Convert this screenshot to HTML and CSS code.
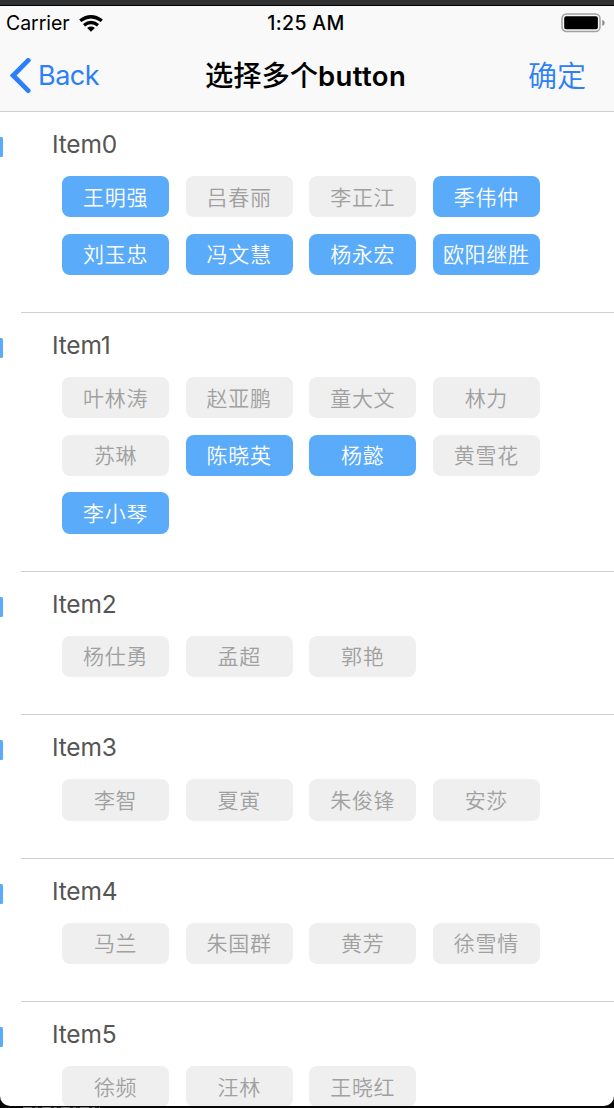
FILE: index.html
```html
<!DOCTYPE html>
<html lang="zh-CN">
<head>
<meta charset="utf-8">
<title>选择多个button</title>
<link rel="stylesheet" href="styles.css">
</head>
<body>
<div class="screen">
  <header class="header">
    <div class="status">
      <div class="carrier"><span>Carrier</span>
        <svg class="wifi" width="24" height="17" viewBox="0 0 24 17" fill="none" stroke="#000" stroke-width="3.3"><path d="M1.2 5.8Q12-2.4 22.8 5.8"/><path d="M5 10.2Q12 4.8 19 10.2"/><path d="M12 16.7L8.1 13Q12 10.2 15.9 13Z" fill="#000" stroke="none"/></svg>
      </div>
      <div class="time">1:25 AM</div>
      <svg class="battery" width="45" height="20" viewBox="0 0 45 20"><rect x="1" y="1" width="38" height="17.5" rx="4.5" fill="#f9f9f9" stroke="#a0a0a0" stroke-width="1.5"/><rect x="3.2" y="3.2" width="33.7" height="13" rx="2" fill="#000"/><path d="M41.3 6.7Q43.7 7.5 43.7 9.8T41.3 12.9Z" fill="#8a8a8a"/></svg>
    </div>
    <nav class="nav">
      <div class="back"><svg width="22" height="36" viewBox="0 0 22 36" fill="none" stroke="#2c7ff8" stroke-width="4.8" stroke-linecap="round"><path d="M18.2 2.4L3.2 17.5L18.2 32.6" stroke-linejoin="miter"/></svg><span>Back</span></div>
      <h1 class="title">选择多个<b>button</b></h1>
      <div class="confirm">确定</div>
    </nav>
  </header>
  <main class="list">
    <section class="item"><h2>Item0</h2><div class="grid"><button class="on">王明强</button><button>吕春丽</button><button>李正江</button><button class="on">季伟仲</button><button class="on">刘玉忠</button><button class="on">冯文慧</button><button class="on">杨永宏</button><button class="on">欧阳继胜</button></div></section>
    <section class="item"><h2>Item1</h2><div class="grid"><button>叶林涛</button><button>赵亚鹏</button><button>童大文</button><button>林力</button><button>苏琳</button><button class="on">陈晓英</button><button class="on">杨懿</button><button>黄雪花</button><button class="on">李小琴</button></div></section>
    <section class="item"><h2>Item2</h2><div class="grid"><button>杨仕勇</button><button>孟超</button><button>郭艳</button></div></section>
    <section class="item"><h2>Item3</h2><div class="grid"><button>李智</button><button>夏寅</button><button>朱俊锋</button><button>安莎</button></div></section>
    <section class="item"><h2>Item4</h2><div class="grid"><button>马兰</button><button>朱国群</button><button>黄芳</button><button>徐雪情</button></div></section>
    <section class="item"><h2>Item5</h2><div class="grid"><button>徐频</button><button>汪林</button><button>王晓红</button></div></section>
  </main>
</div>
<div class="edge"></div>
</body>
</html>
```
FILE: styles.css
```css
* { box-sizing: border-box; }
body {
  margin: 0;
  height: 1108px;
  overflow: hidden;
  background: #060607;
  font-family: Inter, "Noto Sans CJK SC", sans-serif;
}
.screen {
  height: 1106px;
  overflow: hidden;
  border-top: 5px solid #2f3132;
  border-radius: 0 0 10px 10px;
  background: #fff;
}
.header {
  height: 107px;
  border-top: 1px solid #000;
  border-bottom: 1px solid #cfcfcf;
  background: #f9f9f9;
}
.status {
  display: grid;
  grid-template-columns: 1fr auto 1fr;
  align-items: center;
  height: 34px;
  padding: 0 8px 0 6px;
  font-size: 19.5px;
}
.carrier { display: flex; align-items: center; gap: 9px; letter-spacing: -.05px; }
.time { font-weight: 500; font-size: 19.5px; letter-spacing: .35px; }
.battery { justify-self: end; }
.nav {
  display: grid;
  grid-template-columns: 1fr auto 1fr;
  align-items: center;
  height: 71px;
  padding: 0 13px 0 10px;
  color: #2c7ff8;
}
.back { display: flex; align-items: center; gap: 6px; font-size: 27px; letter-spacing: -.5px; }
.title { margin: 0; padding-bottom: 4px; color: #000; font-size: 28.3px; font-weight: 500; white-space: nowrap; }
.title b { font-size: 27.5px; font-weight: 600; letter-spacing: .35px; }
.confirm { justify-self: end; padding: 0 15px 4px 0; font-size: 29px; font-weight: 350; }
.item {
  position: relative;
  padding: 15px 0 38.1px 62px;
}
.item::before {
  content: "";
  position: absolute;
  left: 0;
  top: 25px;
  width: 3px;
  height: 20px;
  border-radius: 0 1.5px 1.5px 0;
  background: #5aabf9;
}
.item::after {
  content: "";
  position: absolute;
  left: 21px;
  right: 0;
  bottom: 0;
  height: 1px;
  background: #d0d0d0;
}
.item h2 {
  margin: 0 0 15px -10px;
  color: #555;
  font-size: 24.5px;
  font-weight: 400;
  letter-spacing: -.2px;
  line-height: 34px;
}
.grid {
  display: grid;
  grid-template-columns: repeat(4, 107.2px);
  grid-auto-rows: 41.3px;
  gap: 16.4px;
}
.grid button {
  padding: 0 0 2px;
  border: 0;
  border-radius: 8px;
  background: #efefef;
  color: #a0a0a0;
  font-family: "Noto Sans CJK SC", sans-serif;
  font-size: 21px;
  font-weight: 350;
  letter-spacing: .7px;
  white-space: nowrap;
}
.grid .on { background: #5aabf9; color: #fff; }
/* Sliver of the window below the device screen */
.edge {
  width: 77px;
  height: 1px;
  margin: 1px 0 0 23px;
  background: repeating-linear-gradient(90deg, #777 0 9px, #222 9px 12px, #666 12px 15px, #222 15px 19px);
}
```
